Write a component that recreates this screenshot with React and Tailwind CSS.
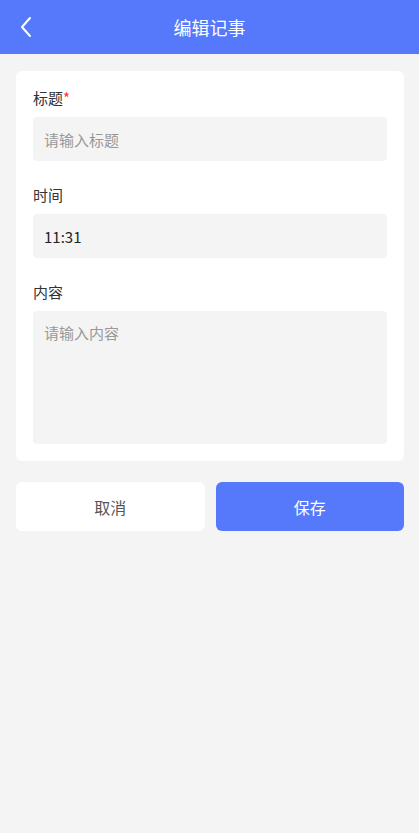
import React, { useState } from 'react';

// Edit-note form screen
const font = { fontFamily: '"Noto Sans CJK SC", "Noto Sans", sans-serif' };

function Field({ label, required, children }) {
  return (
    <div className="flex flex-col gap-[9px]">
      <div className="h-5 text-[15px] leading-5 text-[#333]">
        {label}
        {required && <span className="text-[#f33]">*</span>}
      </div>
      {children}
    </div>
  );
}

export default function App() {
  const [title, setTitle] = useState('');
  const [time, setTime] = useState('11:31');
  const [content, setContent] = useState('');

  return (
    <div className="min-h-[833px] w-full bg-[#f4f4f4]" style={font}>
      <div className="relative flex h-[54px] items-center justify-center bg-[#5679fc]">
        <button className="absolute left-[14px] top-[15px] flex h-6 w-6 items-center justify-center">
          <svg width="14" height="22" viewBox="0 0 14 22" fill="none">
            <path d="M11 2 L3 11 L11 20" stroke="white" strokeWidth="2" strokeLinecap="round" strokeLinejoin="round" />
          </svg>
        </button>
        <h1 className="text-[18px] font-normal text-white">编辑记事</h1>
      </div>

      <div className="pl-4 pr-[15px] pt-[17px]">
        <div className="flex flex-col gap-6 rounded-[6px] bg-white px-[17px] py-[17px]">
          <Field label="标题" required>
            <input
              value={title}
              onChange={e => setTitle(e.target.value)}
              placeholder="请输入标题"
              className="h-[44px] w-full rounded-[4px] bg-[#f4f4f4] px-[11px] text-[15px] text-[#222] outline-none placeholder:text-[#999]"
            />
          </Field>
          <Field label="时间">
            <input
              value={time}
              onChange={e => setTime(e.target.value)}
              className="h-[44px] w-full rounded-[4px] bg-[#f4f4f4] px-[11px] text-[15px] text-[#222] outline-none"
            />
          </Field>
          <Field label="内容">
            <textarea
              value={content}
              onChange={e => setContent(e.target.value)}
              placeholder="请输入内容"
              className="block h-[133px] w-full resize-none rounded-[4px] bg-[#f4f4f4] px-[11px] py-[11px] text-[15px] leading-[22px] text-[#222] outline-none placeholder:text-[#999]"
            />
          </Field>
        </div>

        <div className="mt-[21px] flex gap-[11px]">
          <button className="h-[49px] flex-1 rounded-[6px] bg-white text-[16px] text-[#555]">取消</button>
          <button className="h-[49px] flex-1 rounded-[6px] bg-[#5679fc] text-[16px] text-white">保存</button>
        </div>
      </div>
    </div>
  );
}
